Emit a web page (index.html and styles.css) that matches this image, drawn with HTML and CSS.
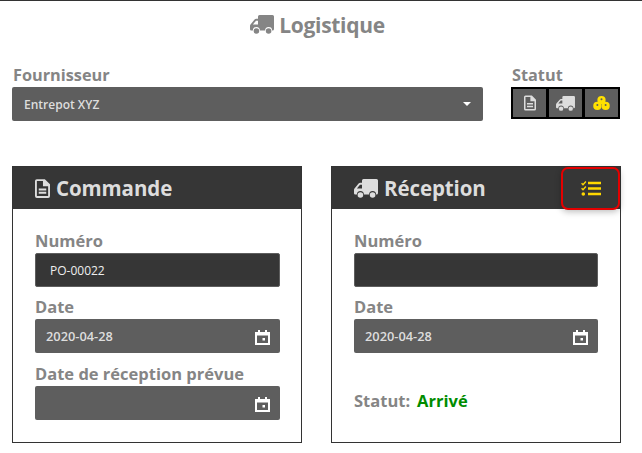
FILE: index.html
```html
<!DOCTYPE html>
<html>
<head>
  <title>Logistique</title>
  <link rel="stylesheet" href="styles.css">
</head>
<body>
  <svg class="defs" width="0" height="0">
    <symbol id="truck" viewBox="0 0 24 19">
      <path fill="currentColor" fill-rule="evenodd" d="M9.500 0h13A1.500 1.500 0 0 1 24 1.500V14a1.500 1.500 0 0 1-1.500 1.500h-.4a3.500 3.500 0 0 0-7 0h-5.200a3.500 3.500 0 0 0-7 0H1.200A1.200 1.200 0 0 1 0 14.300V11c0-.7.200-1.300.7-1.800l3.900-4.600C5 4.100 5.600 3.800 6.200 3.800H8V1.500A1.500 1.500 0 0 1 9.500 0zM6 5.800 2.900 9.500H8V5.800z"/>
      <circle fill="currentColor" cx="6.400" cy="16" r="2.800"/>
      <circle fill="currentColor" cx="18.600" cy="16" r="2.800"/>
    </symbol>
    <symbol id="doc" viewBox="0 0 16 20">
      <path fill="currentColor" fill-rule="evenodd" d="M2 0h8.500L16 5.500V18a2 2 0 0 1-2 2H2a2 2 0 0 1-2-2V2a2 2 0 0 1 2-2zm0 2v16h12V7.500H8.500V2zm2 8h8v2H4zm0 3.500h8v2H4z"/>
    </symbol>
    <symbol id="calendar" viewBox="0 0 15 15">
      <path fill="currentColor" fill-rule="evenodd" d="M3 0h2v2h5V0h2v2h3v13H0V2h3zM2 5.500V13h11V5.500zM7.500 8H10v2.500H7.500z"/>
    </symbol>
    <symbol id="coins" viewBox="0 0 20 17">
      <circle fill="currentColor" cx="10" cy="5" r="5"/>
      <circle fill="currentColor" cx="5" cy="12" r="5"/>
      <circle fill="currentColor" cx="15" cy="12" r="5"/>
      <circle fill="#5e5e5e" cx="10" cy="4" r="1.200"/>
      <circle fill="#5e5e5e" cx="5" cy="11" r="1.200"/>
      <circle fill="#5e5e5e" cx="15" cy="11" r="1.200"/>
    </symbol>
  </svg>

  <h1 class="page-title">
    <svg class="icon-title"><use href="#truck"></use></svg>
    <span>Logistique</span>
  </h1>

  <div class="top-row">
    <div class="supplier">
      <label class="top-label">Fournisseur</label>
      <div class="select">
        <span>Entrepot XYZ</span>
        <span class="caret"></span>
      </div>
    </div>
    <div class="status">
      <label class="top-label">Statut</label>
      <div class="status-buttons">
        <div class="status-btn"><svg class="icon-doc"><use href="#doc"></use></svg></div>
        <div class="status-btn"><svg class="icon-truck"><use href="#truck"></use></svg></div>
        <div class="status-btn active"><svg class="icon-coins"><use href="#coins"></use></svg></div>
      </div>
    </div>
  </div>

  <div class="cards">
    <section class="card">
      <header class="card-header">
        <h2><svg class="icon-doc-big"><use href="#doc"></use></svg>Commande</h2>
      </header>
      <div class="card-body order">
        <label class="field-label">Numéro</label>
        <div class="input dark">PO-00022</div>
        <label class="field-label">Date</label>
        <div class="input date">
          <span>2020-04-28</span>
          <svg class="icon-cal"><use href="#calendar"></use></svg>
        </div>
        <label class="field-label expected">Date de réception prévue</label>
        <div class="input date">
          <span></span>
          <svg class="icon-cal"><use href="#calendar"></use></svg>
        </div>
      </div>
    </section>

    <section class="card">
      <header class="card-header">
        <h2><svg class="icon-truck-big"><use href="#truck"></use></svg>Réception</h2>
        <button class="checklist-btn">
          <svg class="icon-list" viewBox="0 0 20 15">
            <path d="M.6 2.300 2 3.700 4.900.6M.6 7.300 2 8.700 4.900 5.600" fill="none" stroke="currentColor" stroke-width="1.400"/>
            <circle cx="2.300" cy="13" r="1.800" fill="currentColor"/>
            <path d="M7 .8h13v2.500H7zM7 6.200h13v2.500H7zM7 11.700h13v2.500H7z" fill="currentColor"/>
          </svg>
        </button>
      </header>
      <div class="card-body">
        <label class="field-label">Numéro</label>
        <div class="input dark"></div>
        <label class="field-label">Date</label>
        <div class="input date">
          <span>2020-04-28</span>
          <svg class="icon-cal"><use href="#calendar"></use></svg>
        </div>
        <div class="arrival">
          <span class="arrival-label">Statut:</span>
          <span class="arrival-value">Arrivé</span>
        </div>
      </div>
    </section>
  </div>
</body>
</html>
```

FILE: styles.css
```css
/* Page */
body {
  margin: 0;
  border-top: 1px solid #333;
  font-family: "Open Sans", "Noto Sans", sans-serif;
  color: #858585;
  background-color: #fff;
}

.defs {
  display: block;
  height: 0;
}

.page-title {
  display: flex;
  justify-content: center;
  align-items: center;
  gap: 5px;
  height: 47px;
  margin: 0;
  padding-right: 7px;
  font-size: 21px;
  font-weight: 700;
  letter-spacing: -0.300px;
}

.icon-title {
  width: 24px;
  height: 19px;
}

/* Fournisseur + statut */
.top-row {
  display: flex;
  margin-left: 12px;
  margin-top: 17px;
}

.supplier {
  width: 471px;
}

.status {
  margin-left: 28px;
}

.top-label {
  display: block;
  height: 22px;
  padding-left: 1px;
  line-height: 21px;
  font-size: 16.300px;
  font-weight: 700;
}

.select {
  display: flex;
  justify-content: space-between;
  align-items: center;
  height: 34px;
  padding: 0 12px 0 12px;
  background-color: #5e5e5e;
  border-radius: 2px;
  color: #ddd;
  font-size: 12px;
  font-weight: 600;
}

.caret {
  border-left: 4.500px solid transparent;
  border-right: 4.500px solid transparent;
  border-top: 4.500px solid #fff;
}

.status-buttons {
  display: flex;
  gap: 3px;
  padding: 2px;
  background-color: #000;
}

.status-btn {
  display: flex;
  justify-content: center;
  align-items: center;
  width: 33px;
  height: 28px;
  background-color: #5e5e5e;
  color: #ddd;
}

.status-btn.active {
  color: #ffe100;
}

.icon-doc {
  width: 12px;
  height: 16px;
}

.icon-truck {
  width: 19px;
  height: 15px;
}

.icon-coins {
  width: 17px;
  height: 14px;
}

/* Cartes */
.cards {
  display: grid;
  grid-template-columns: 290px 290px;
  gap: 29px;
  margin: 45px 0 0 12px;
}

.card {
  height: 277px;
  box-sizing: border-box;
  border: 1px solid #333;
}

.card-header {
  display: flex;
  justify-content: space-between;
  align-items: center;
  height: 42px;
  padding-left: 22px;
  background-color: #363636;
}

.card-header h2 {
  display: flex;
  align-items: center;
  gap: 6px;
  margin: 0;
  color: #ddd;
  font-size: 20.500px;
  font-weight: 700;
  letter-spacing: -0.100px;
}

.icon-doc-big {
  width: 15px;
  height: 19px;
}

.icon-truck-big {
  width: 24px;
  height: 19px;
}

.checklist-btn {
  display: flex;
  justify-content: center;
  align-items: center;
  width: 59px;
  height: 43px;
  padding: 0;
  background-color: #363636;
  border: 2px solid #e40000;
  border-radius: 7px;
  box-shadow: 0 2px 6px rgba(0, 0, 0, 0.25);
  color: #ffd800;
}

.icon-list {
  width: 20px;
  height: 15px;
}

.card-body {
  padding: 22px 22px 0;
}

.card-body.order {
  padding-right: 21px;
}

.field-label {
  display: block;
  height: 22px;
  line-height: 20px;
  color: #858585;
  font-size: 16.500px;
  font-weight: 700;
}

.field-label.expected {
  margin-top: 11px;
}

.input {
  display: flex;
  justify-content: space-between;
  align-items: center;
  height: 34px;
  margin-bottom: 10px;
  box-sizing: border-box;
  border-radius: 2px;
  font-size: 12px;
}

.input.dark {
  padding-left: 14px;
  background-color: #363636;
  border: 1px solid #5e5e5e;
  color: #eee;
}

.input.date {
  padding: 0 10px 0 11px;
  background-color: #5e5e5e;
  color: #ddd;
  font-size: 12.800px;
  font-weight: 600;
}

.icon-cal {
  width: 15px;
  height: 15px;
  margin-top: 3px;
  color: #fff;
}

.arrival {
  display: flex;
  gap: 7px;
  margin-top: 36px;
  font-size: 16.500px;
  font-weight: 700;
}

.arrival-value {
  color: #008c00;
}
```
